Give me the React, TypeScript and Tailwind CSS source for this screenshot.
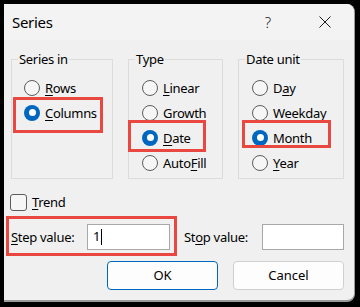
import React from "react";

type Item = { pre?: string; key: string; post: string; checked?: boolean; mark?: string };

function Radio({ item }: { item: Item }) {
    return (
        <div className="relative flex h-[25px] items-center gap-[5px]">
            {item.checked ? (
                <span className="flex h-[16px] w-[16px] items-center justify-center rounded-full bg-[#0067c0]">
                    <span className="h-[7px] w-[7px] rounded-full bg-white" />
                </span>
            ) : (
                <span className="h-[16px] w-[16px] rounded-full border border-[#5c5c5c] bg-[#f6f6f6]" />
            )}
            <span className="text-[13px] leading-[16px] tracking-[-0.3px] text-black">
                {item.pre}
                <span className="underline underline-offset-[2px]">{item.key}</span>
                {item.post}
            </span>
            {item.mark && <span className={"absolute border-[3px] border-[#e8483f] " + item.mark} />}
        </div>
    );
}

function Group({ title, width, pad, items }: { title: string; width: string; pad: string; items: Item[] }) {
    return (
        <fieldset className={"h-[128px] border border-[#dcdcdc] " + width}>
            <legend className="ml-[6px] px-[1px] text-[13px] leading-[16px] tracking-[-0.3px] text-black">{title}</legend>
            <div className={"flex flex-col pt-[8px] " + pad}>
                {items.map((it) => (
                    <Radio key={it.key + it.post} item={it} />
                ))}
            </div>
        </fieldset>
    );
}

export default function App() {
    return (
        <div className="h-[307px] w-[360px] bg-black pl-[4px] pt-[4px] font-['Noto_Sans',sans-serif]">
            <div className="flex h-[298px] w-[351px] flex-col overflow-hidden rounded-r-[8px] border-r border-b-2 border-[#9a9a9a] bg-[#f0f0f0]">
                {/* title bar */}
                <div className="flex h-[36px] items-center bg-[#f3f3f3] pl-[8px] pr-[6px]">
                    <span className="text-[15px] tracking-[-0.3px] text-black">Series</span>
                    <span className="ml-auto flex w-[46px] justify-center text-[15px] font-light text-[#1a1a1a]">?</span>
                    <span className="ml-[11px] flex w-[46px] justify-center">
                        <svg width="12" height="12" viewBox="0 0 12 12">
                            <path d="M0.5 0.5L11.5 11.5M11.5 0.5L0.5 11.5" stroke="#1a1a1a" strokeWidth="1" />
                        </svg>
                    </span>
                </div>

                {/* groups */}
                <div className="flex gap-[15px] pl-[7px] pt-[11px]">
                    <Group
                        title="Series in"
                        width="w-[102px]"
                        pad="pl-[12px]"
                        items={[
                            { key: "R", post: "ows" },
                            { key: "C", post: "olumns", checked: true, mark: "left-[-11px] top-[-3px] w-[90px] h-[36px]" },
                        ]}
                    />
                    <Group
                        title="Type"
                        width="w-[95px]"
                        pad="pl-[13px]"
                        items={[
                            { key: "L", post: "inear" },
                            { key: "G", post: "rowth" },
                            { key: "D", post: "ate", checked: true, mark: "left-[-14px] top-[-5px] w-[78px] h-[32px]" },
                            { pre: "Auto", key: "F", post: "ill" },
                        ]}
                    />
                    <Group
                        title="Date unit"
                        width="w-[106px]"
                        pad="pl-[13px]"
                        items={[
                            { pre: "D", key: "a", post: "y" },
                            { key: "W", post: "eekday" },
                            { key: "M", post: "onth", checked: true, mark: "left-[-10px] top-[-5px] w-[89px] h-[28px]" },
                            { key: "Y", post: "ear" },
                        ]}
                    />
                </div>

                {/* trend */}
                <div className="mt-[14px] flex h-[18px] items-center gap-[5px] pl-[6px]">
                    <span className="h-[17px] w-[17px] rounded-[3px] border border-[#5c5c5c] bg-[#f6f6f6]" />
                    <span className="text-[13px] leading-[16px] tracking-[-0.3px] text-black">
                        <span className="underline underline-offset-[2px]">T</span>rend
                    </span>
                </div>

                {/* step / stop */}
                <div className="mt-[13px] flex h-[26px] items-center pl-[7px]">
                    <div className="relative flex items-center">
                        <span className="w-[76px] text-[13px] leading-[16px] tracking-[-0.3px] text-black">
                            <span className="underline underline-offset-[2px]">S</span>tep value:
                        </span>
                        <div className="flex h-[26px] w-[83px] items-center border border-[#a8a8a8] bg-white pl-[5px] text-[13px] text-black">
                            1<span className="ml-[1px] h-[16px] w-[1px] bg-black" />
                        </div>
                        <span className="absolute bottom-[-6px] left-[-5px] right-[-7px] top-[-8px] border-[3px] border-[#e8483f]" />
                    </div>
                    <span className="ml-[14px] w-[78px] text-[13px] leading-[16px] tracking-[-0.3px] text-black">
                        St<span className="underline underline-offset-[2px]">o</span>p value:
                    </span>
                    <div className="h-[26px] w-[82px] border border-[#a8a8a8] bg-white" />
                </div>

                {/* buttons */}
                <div className="mt-[11px] flex justify-end gap-[15px] pr-[10px]">
                    <button className="h-[29px] w-[111px] rounded-[4px] border border-[#0067c0] bg-[#fdfdfd] text-[13px] text-black">
                        OK
                    </button>
                    <button className="h-[29px] w-[111px] rounded-[4px] border border-[#d0d0d0] bg-[#fdfdfd] text-[13px] text-black">
                        Cancel
                    </button>
                </div>
            </div>
        </div>
    );
}
